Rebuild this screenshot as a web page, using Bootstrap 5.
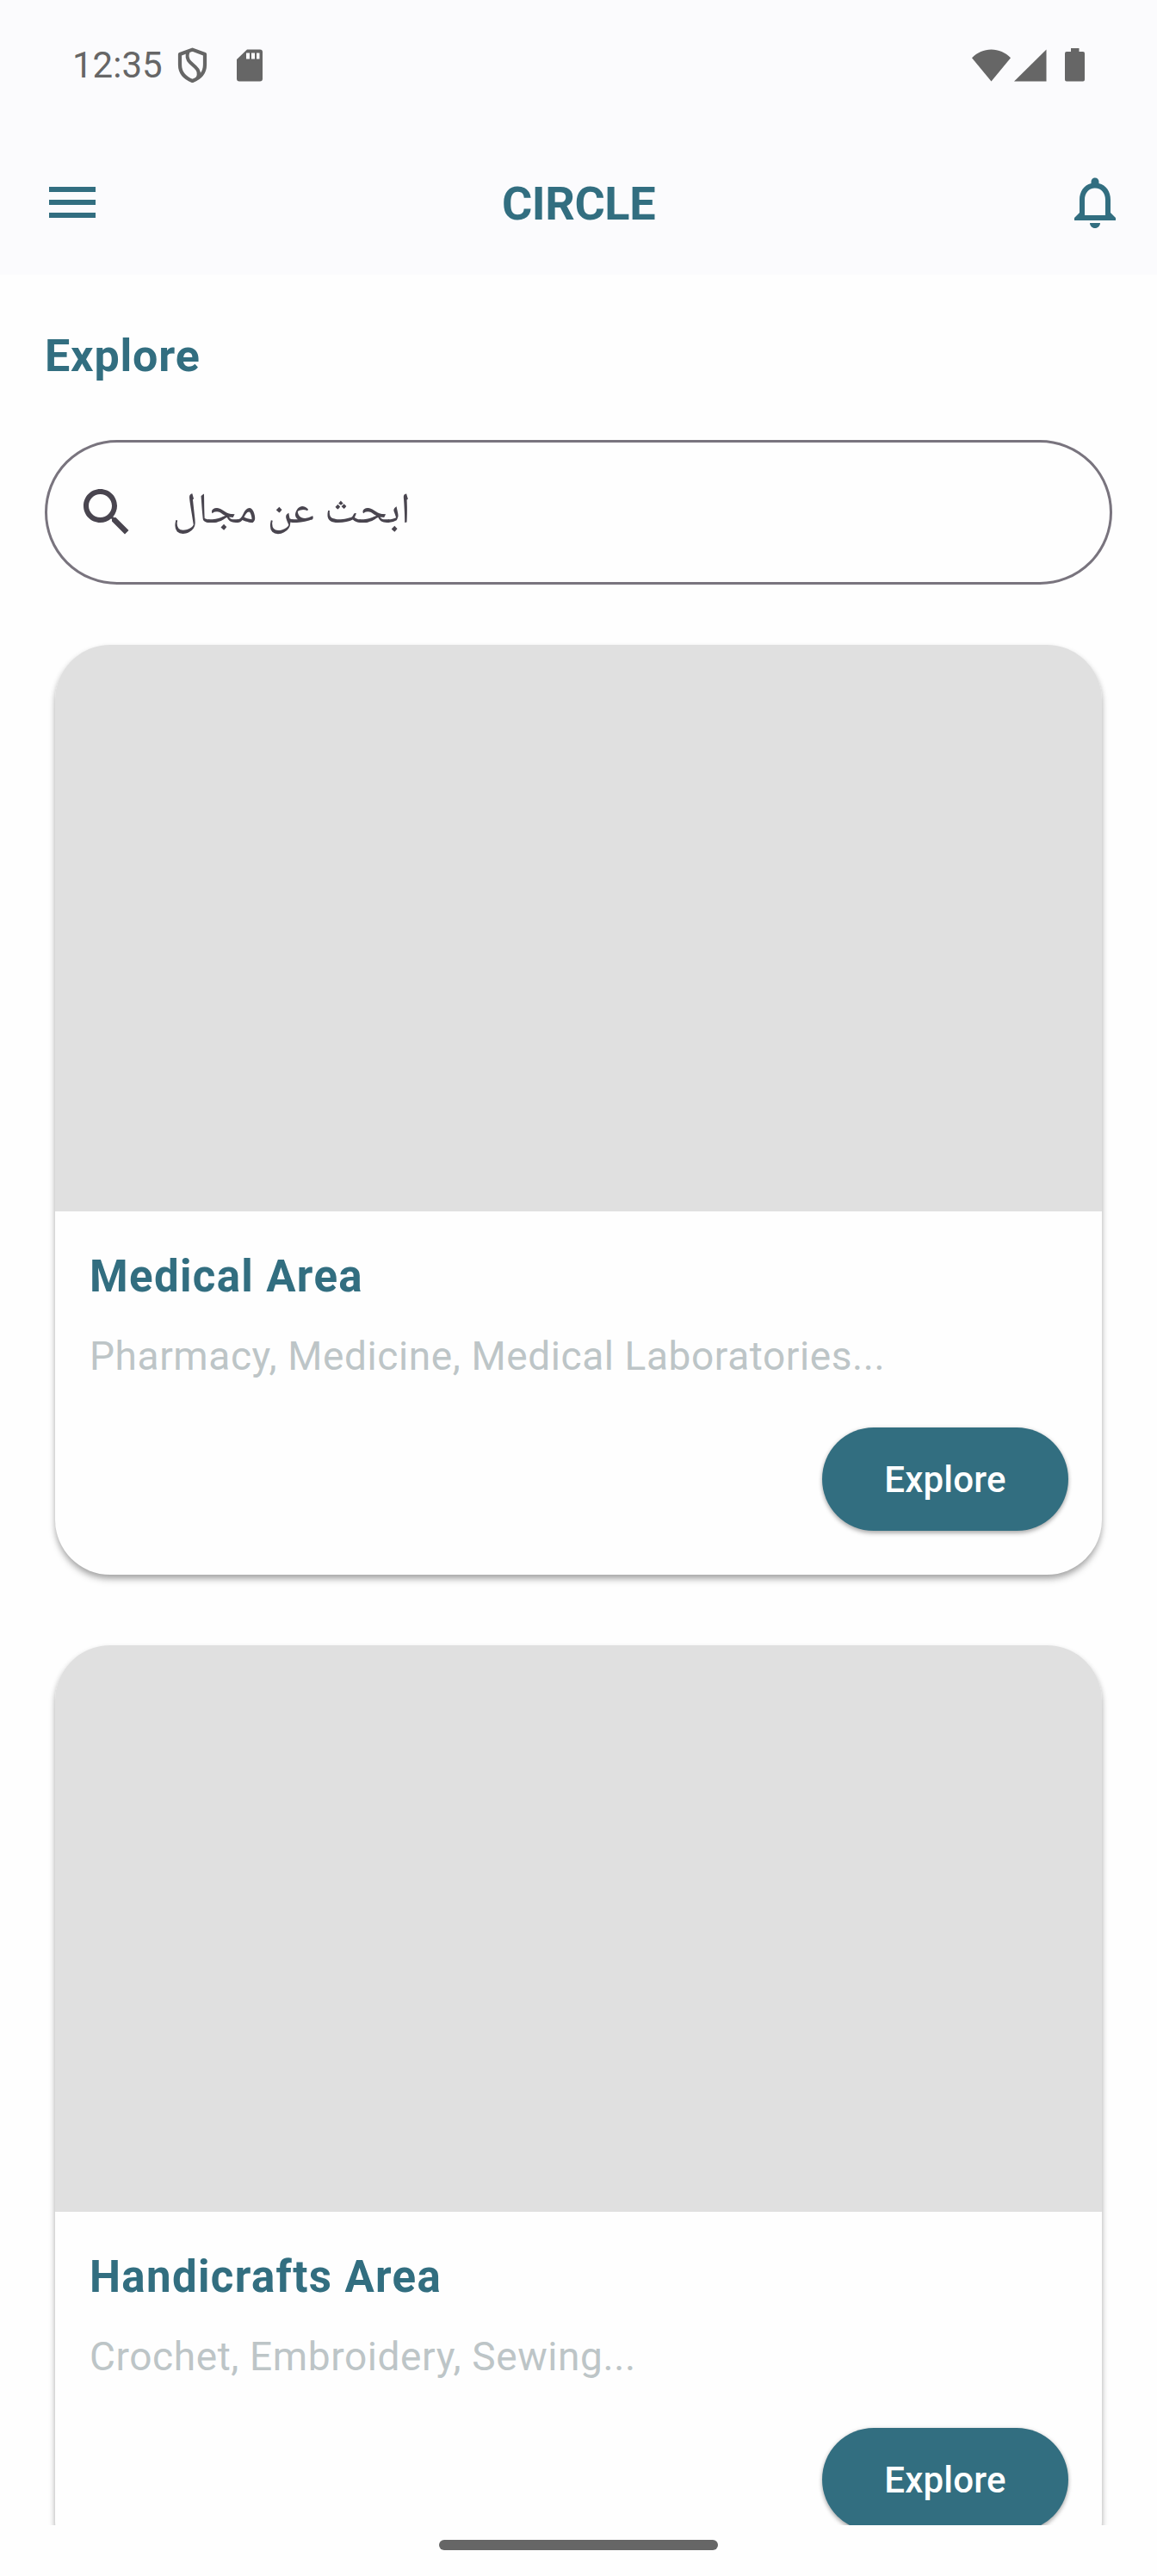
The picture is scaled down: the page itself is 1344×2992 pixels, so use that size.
<!DOCTYPE html>
<html lang="en">
<head>
<meta charset="utf-8">
<meta name="viewport" content="width=device-width, initial-scale=1">
<title>Circle</title>
<link href="https://cdn.jsdelivr.net/npm/bootstrap@5.3.0/dist/css/bootstrap.min.css" rel="stylesheet">
<style>
  :root { --teal: #326e80; --ink: #49454f; --sys: #666; }
  body { font-family: Roboto, "Noto Sans", sans-serif; background: #fefefe; }
  svg { display: block; flex: none; }
  .screen { height: 2992px; }
  .top-area { height: 319px; background: #fbfbfd; }
  .status-bar { height: 151px; padding: 0 84px; color: var(--sys); }
  .clock { font-size: 42px; line-height: 50px; }
  .shield-icon { margin-left: 16px; }
  .sd-icon { margin-left: 32px; }
  .battery-icon { margin-left: 21px; }
  .app-bar { height: 168px; padding: 0 36px 0 48px; color: var(--teal); }
  .brand { font-size: 54px; line-height: 64px; font-weight: 700; letter-spacing: -.4px; padding-top: 3px; margin-right: 12px; }
  .feed { padding: 0 52px; height: 2614px; }
  .page-title { font-size: 52px; line-height: 60px; font-weight: 700; letter-spacing: .85px; color: var(--teal); margin: 65px 0 67px; }
  .search-box { height: 168px; border: 3px solid #79747e; color: var(--ink); padding: 0 33px; gap: 40px; flex: none; }
  .search-hint { font-family: "Noto Naskh Arabic", "Noto Sans Arabic", "DejaVu Sans", sans-serif; font-size: 50px; line-height: 72px; word-spacing: 1px; padding-top: 3px; }
  .area-card { margin: 70px 12px 0; height: 1080px; border: 0; border-radius: 64px; background: #fefefe; flex: none;
    box-shadow: 0 6px 8px -1px rgba(0,0,0,.28), 0 3px 6px rgba(0,0,0,.13); }
  .area-card + .area-card { margin-top: 82px; }
  .area-pic { height: 658px; background: #e0e0e0; border-radius: 64px 64px 0 0; }
  .area-body { padding: 45px 39px 51px 40px; }
  .area-name { font-size: 51px; line-height: 62px; font-weight: 700; letter-spacing: 1.35px; color: var(--teal); }
  .area-desc { font-size: 46px; line-height: 60px; letter-spacing: .6px; color: #bdc5c7; margin-top: 31px; }
  .btn-explore { width: 286px; height: 120px; background: var(--teal); color: #fff; font-size: 42px; font-weight: 500; letter-spacing: .2px; border: 0;
    box-shadow: 0 3px 5px rgba(0,0,0,.28), 0 0 5px rgba(0,0,0,.1); }
  .nav-area { height: 59px; padding-top: 17px; }
  .nav-pill { width: 324px; height: 12px; background: var(--sys); }
</style>
</head>
<body>
<div class="screen d-flex flex-column overflow-hidden">
  <header class="top-area">
    <div class="status-bar d-flex align-items-center">
      <span class="clock">12:35</span>
      <svg class="shield-icon" width="38" height="42" viewBox="0 0 38 42" fill="none" stroke="currentColor" stroke-width="4.200" stroke-linejoin="round"><path d="M18.500 2.600 33 8v12c0 9-5.500 15.500-14.500 19C9.500 35.500 4 29 4 20V8z"/><path d="M13.500 5c-1.500 4-1.300 9 2.500 12.500l6 5.500c4.500 4 5 8 2.500 13" stroke-width="4"/></svg>
      <svg class="sd-icon" width="30" height="38" viewBox="0 0 30 38" fill="currentColor"><path fill-rule="evenodd" d="M12 .5h15a3 3 0 0 1 3 3v31a3 3 0 0 1-3 3H3a3 3 0 0 1-3-3V12zM11 4.500v7h4v-7zm6 0v7h4v-7zm6 0v7h3.500v-7z"/></svg>
      <div class="ms-auto d-flex align-items-center">
        <svg width="45" height="38" viewBox="0 0 45 38" fill="currentColor"><path d="M0 10.200C6 4 14 .5 22.500.5S39 4 45 10.200L22.500 37.500z"/></svg>
        <svg class="ms-1" width="38" height="38" viewBox="0 0 38 38" fill="currentColor"><path d="M37.500.5v37H0z"/></svg>
        <svg class="battery-icon" width="23" height="39" viewBox="0 0 23 39" fill="currentColor"><path d="M7 0h9.500v4H21a2 2 0 0 1 2 2v30.500a2 2 0 0 1-2 2H2a2 2 0 0 1-2-2V6a2 2 0 0 1 2-2h5z"/></svg>
      </div>
    </div>
    <nav class="app-bar d-flex align-items-center justify-content-between">
      <svg width="72" height="72" viewBox="0 0 24 24" fill="currentColor"><path d="M3 18h18v-2H3v2zm0-5h18v-2H3v2zm0-7v2h18V6H3z"/></svg>
      <span class="brand">CIRCLE</span>
      <svg width="72" height="72" viewBox="0 0 24 24" fill="currentColor"><path d="M12 22c1.100 0 2-.9 2-2h-4c0 1.100.9 2 2 2zm6-6v-5c0-3.070-1.630-5.640-4.500-6.320V4c0-.83-.67-1.500-1.500-1.500s-1.500.67-1.500 1.500v.68C7.640 5.360 6 7.920 6 11v5l-2 2v1h16v-1l-2-2zm-2 1H8v-6c0-2.480 1.510-4.500 4-4.500s4 2.020 4 4.500v6z"/></svg>
    </nav>
  </header>

  <main class="feed d-flex flex-column overflow-hidden">
    <h1 class="page-title">Explore</h1>
    <div class="search-box rounded-pill d-flex align-items-center">
      <svg width="72" height="72" viewBox="0 0 24 24" fill="currentColor"><path d="M15.500 14h-.79l-.28-.27C15.410 12.590 16 11.110 16 9.500 16 5.910 13.090 3 9.500 3S3 5.910 3 9.500 5.910 16 9.500 16c1.610 0 3.090-.59 4.230-1.570l.27.28v.79l5 4.990L20.490 19l-4.990-5zm-6 0C7.010 14 5 11.990 5 9.500S7.010 5 9.500 5 14 7.010 14 9.500 11.990 14 9.500 14z"/></svg>
      <span class="search-hint" lang="ar" dir="rtl">ابحث عن مجال</span>
    </div>

    <article class="card area-card">
      <div class="area-pic"></div>
      <div class="area-body card-body d-flex flex-column">
        <h2 class="area-name mb-0">Medical Area</h2>
        <p class="area-desc mb-0">Pharmacy, Medicine, Medical Laboratories...</p>
        <button class="btn btn-explore rounded-pill align-self-end mt-auto" type="button">Explore</button>
      </div>
    </article>

    <article class="card area-card">
      <div class="area-pic"></div>
      <div class="area-body card-body d-flex flex-column">
        <h2 class="area-name mb-0">Handicrafts Area</h2>
        <p class="area-desc mb-0">Crochet, Embroidery, Sewing...</p>
        <button class="btn btn-explore rounded-pill align-self-end mt-auto" type="button">Explore</button>
      </div>
    </article>
  </main>

  <footer class="nav-area d-flex justify-content-center">
    <div class="nav-pill rounded-pill"></div>
  </footer>
</div>
<script src="https://cdn.jsdelivr.net/npm/bootstrap@5.3.0/dist/js/bootstrap.bundle.min.js"></script>
</body>
</html>
